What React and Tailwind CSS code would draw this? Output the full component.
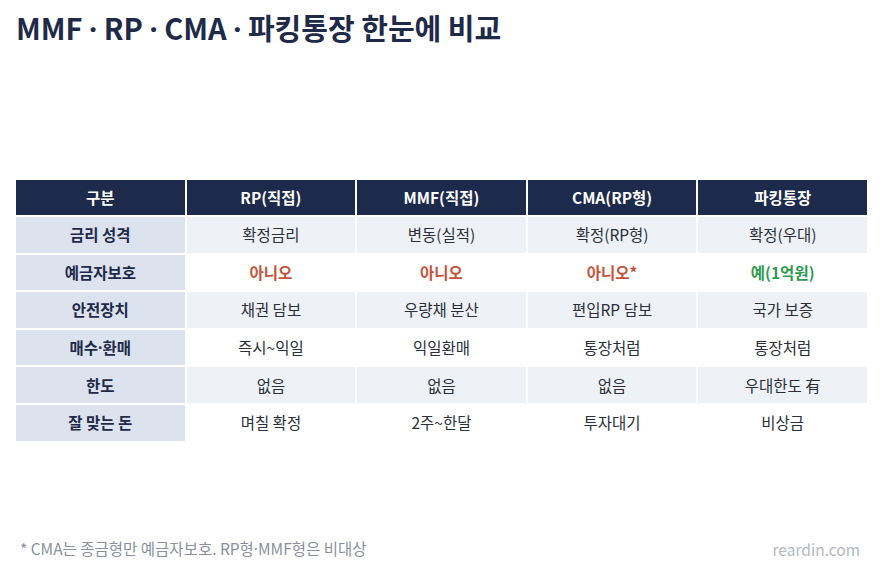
import React from "react";

const headers = ["구분", "RP(직접)", "MMF(직접)", "CMA(RP형)", "파킹통장"];

const rows = [
  { label: "금리 성격", cells: ["확정금리", "변동(실적)", "확정(RP형)", "확정(우대)"] },
  {
    label: "예금자보호",
    cells: ["아니오", "아니오", "아니오*", "예(1억원)"],
    tone: ["red", "red", "red", "green"],
  },
  { label: "안전장치", cells: ["채권 담보", "우량채 분산", "편입RP 담보", "국가 보증"] },
  { label: "매수·환매", cells: ["즉시~익일", "익일환매", "통장처럼", "통장처럼"] },
  { label: "한도", cells: ["없음", "없음", "없음", "우대한도 有"] },
  { label: "잘 맞는 돈", cells: ["며칠 확정", "2주~한달", "투자대기", "비상금"] },
];

const font = { fontFamily: '"Noto Sans CJK KR", "Noto Sans", sans-serif' };

// the CJK font draws "·" full width; take it from a latin font instead
const Dots = ({ text }) =>
  text.split("·").map((part, i) => (
    <React.Fragment key={i}>
      {i > 0 && <span className="font-['Noto_Sans']">·</span>}
      {part}
    </React.Fragment>
  ));

const App = () => {
  return (
    <div
      className="w-[882px] h-[579px] bg-white flex flex-col px-4 text-[#1f2a48]"
      style={font}
    >
      <h1 className="h-[36px] text-[29px] leading-[36px] font-bold mt-[9px]">
        <Dots text="MMF · RP · CMA · 파킹통장 한눈에 비교" />
      </h1>

      <div className="mt-[135px] w-[851px] grid grid-cols-5 gap-[2px]">
        {headers.map((h) => (
          <div
            key={h}
            className="h-[35px] bg-[#1d2a4b] text-white font-bold text-[15.5px] flex items-center justify-center"
          >
            {h}
          </div>
        ))}
        {rows.map((row, i) => (
          <React.Fragment key={row.label}>
            <div className="h-[35.6px] bg-[#dce3ef] font-bold text-[15.5px] flex items-center justify-center text-[#1f2a48]">
              <Dots text={row.label} />
            </div>
            {row.cells.map((c, j) => {
              const tone = row.tone ? row.tone[j] : null;
              return (
                <div
                  key={j}
                  className={
                    "h-[35.6px] flex items-center justify-center text-[15.5px] " +
                    (i % 2 === 0 ? "bg-[#eef1f6] " : "bg-white ") +
                    (tone === "red"
                      ? "text-[#c4543b] font-bold"
                      : tone === "green"
                      ? "text-[#2f9a4f] font-bold"
                      : "text-[#2a2f3a]")
                  }
                >
                  {c}
                </div>
              );
            })}
          </React.Fragment>
        ))}
      </div>

      <div className="flex-1" />

      <div className="flex items-center justify-between pl-1 pr-[6px] pb-[20px] text-[15.5px] leading-[20px]">
        <span className="text-[#8b909c]">
          <Dots text="* CMA는 종금형만 예금자보호. RP형·MMF형은 비대상" />
        </span>
        <span className="text-[#b4b8c0]">reardin.com</span>
      </div>
    </div>
  );
};

export default App;
